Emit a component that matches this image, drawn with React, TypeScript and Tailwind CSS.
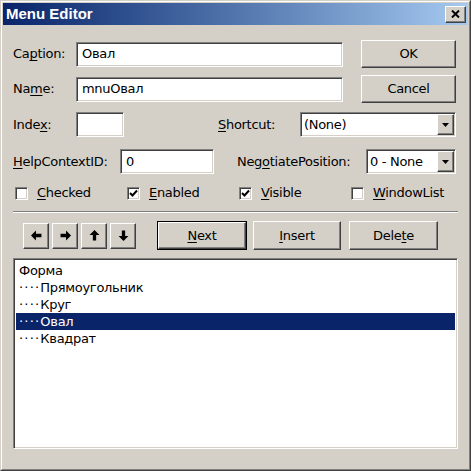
import type { ReactNode } from 'react'

const sunken =
  'border border-t-[#808080] border-l-[#808080] border-b-white border-r-white shadow-[inset_1px_1px_0_#404040,inset_-1px_-1px_0_#d4d0c8]'
const raised =
  'border border-t-white border-l-white border-b-[#404040] border-r-[#404040] shadow-[inset_-1px_-1px_0_#808080]'

// text with one underlined access key
function Mn({ pre = '', k, post = '' }: { pre?: string; k: string; post?: string }) {
  return (
    <span className="whitespace-nowrap">
      {pre}
      <span className="underline underline-offset-2">{k}</span>
      {post}
    </span>
  )
}

function TextBox({ className, value }: { className: string; value?: string }) {
  return (
    <div className={`${sunken} ${className} bg-white flex items-center pl-[5px]`}>
      {value}
    </div>
  )
}

function Button({
  className,
  children,
  isDefault,
}: {
  className: string
  children: ReactNode
  isDefault?: boolean
}) {
  if (isDefault) {
    return (
      <div className={`${className} border border-black flex`}>
        <div className={`${raised} flex-1 flex items-center justify-center`}>{children}</div>
      </div>
    )
  }
  return (
    <div className={`${raised} ${className} flex items-center justify-center`}>{children}</div>
  )
}

function Combo({ className, value }: { className: string; value: string }) {
  return (
    <div className={`${sunken} ${className} bg-white flex p-px`}>
      <div className="flex-1 flex items-center pl-[2px]">{value}</div>
      <div className={`${raised} w-[17px] bg-[#d4d0c8] flex items-center justify-center`}>
        <svg width="7" height="4" viewBox="0 0 7 4">
          <path d="M0 0 H7 L3.5 4 Z" fill="black" />
        </svg>
      </div>
    </div>
  )
}

function Checkbox({ checked, label }: { checked?: boolean; label: ReactNode }) {
  return (
    <div className="w-[112px] flex items-center">
      <div className={`${sunken} w-[13px] h-[13px] bg-white flex items-center justify-center`}>
        {checked && (
          <svg width="9" height="9" viewBox="0 0 9 9">
            <path d="M1 4 L3.5 6.5 L8 1.5" stroke="black" strokeWidth="2" fill="none" />
          </svg>
        )}
      </div>
      <div className="ml-[9px]">{label}</div>
    </div>
  )
}

function Arrow({ d }: { d: string }) {
  return (
    <Button className="w-[26px] h-[26px] mr-[3px]">
      <svg width="11" height="11" viewBox="0 0 10 10">
        <path d={d} fill="black" />
      </svg>
    </Button>
  )
}

const items: [number, string][] = [
  [0, 'Форма'],
  [1, 'Прямоугольник'],
  [1, 'Круг'],
  [1, 'Овал'],
  [1, 'Квадрат'],
]

export default function App() {
  return (
    <div className="w-[471px] h-[471px] bg-[#d4d0c8] border border-t-[#d4d0c8] border-l-[#d4d0c8] border-b-[#404040] border-r-[#404040] font-['DejaVu_Sans',sans-serif] text-[13px] tracking-[-0.3px] text-black">
      <div className="h-full border border-t-white border-l-white border-b-[#808080] border-r-[#808080] p-px flex flex-col">
        {/* Title bar */}
        <div className="h-[22px] flex items-center bg-linear-to-r from-[#0a246a] to-[#a6caf0] pl-[3px] pr-[2px]">
          <span className="flex-1 text-white font-bold text-[15px] tracking-normal font-['Liberation_Sans',sans-serif]">
            Menu Editor
          </span>
          <div className={`${raised} w-[21px] h-[17px] bg-[#d4d0c8] flex items-center justify-center`}>
            <svg width="9" height="8" viewBox="0 0 9 8">
              <path d="M1 0.5 L8 7.5 M8 0.5 L1 7.5" stroke="black" strokeWidth="2" />
            </svg>
          </div>
        </div>

        {/* Body */}
        <div className="pl-[10px] pt-[15px] flex flex-col">
          <div className="flex items-center h-[28px]">
            <div className="w-[63px]">
              <Mn pre="Ca" k="p" post="tion:" />
            </div>
            <TextBox className="w-[267px] h-[25px]" value="Овал" />
            <Button className="ml-[18px] w-[95px] h-[28px]">OK</Button>
          </div>

          <div className="flex items-center h-[28px] mt-[7px]">
            <div className="w-[63px]">
              <Mn pre="Na" k="m" post="e:" />
            </div>
            <TextBox className="w-[267px] h-[25px]" value="mnuОвал" />
            <Button className="ml-[18px] w-[95px] h-[28px]">Cancel</Button>
          </div>

          <div className="flex items-center h-[25px] mt-[9px]">
            <div className="w-[63px]">
              <Mn pre="Inde" k="x" post=":" />
            </div>
            <TextBox className="w-[48px] h-[25px]" />
            <div className="ml-[94px] w-[82px]">
              <Mn k="S" post="hortcut:" />
            </div>
            <Combo className="w-[156px] h-[25px]" value="(None)" />
          </div>

          <div className="flex items-center h-[25px] mt-[12px]">
            <div className="w-[107px]">
              <Mn k="H" post="elpContextID:" />
            </div>
            <TextBox className="w-[94px] h-[25px]" value="0" />
            <div className="ml-[23px] w-[129px]">
              <Mn pre="Neg" k="o" post="tiatePosition:" />
            </div>
            <Combo className="w-[90px] h-[25px]" value="0 - None" />
          </div>

          <div className="flex items-center h-[14px] mt-[12px] pl-[2px]">
            <Checkbox label={<Mn k="C" post="hecked" />} />
            <Checkbox checked label={<Mn k="E" post="nabled" />} />
            <Checkbox checked label={<Mn k="V" post="isible" />} />
            <Checkbox label={<Mn k="W" post="indowList" />} />
          </div>

          <div className="mt-[11px] w-[445px] h-[2px] border-t border-t-[#808080] border-b border-b-white" />

          <div className="flex items-center h-[29px] mt-[8px] pl-[10px]">
            <Arrow d="M0 5 L4.5 0.5 V3.5 H9.5 V6.5 H4.5 V9.5 Z" />
            <Arrow d="M10 5 L5.5 0.5 V3.5 H0.5 V6.5 H5.5 V9.5 Z" />
            <Arrow d="M5 0 L0.5 4.5 H3.5 V9.5 H6.5 V4.5 H9.5 Z" />
            <Arrow d="M5 10 L0.5 5.5 H3.5 V0.5 H6.5 V5.5 H9.5 Z" />
            <Button isDefault className="ml-[18px] w-[90px] h-[29px]">
              <Mn k="N" post="ext" />
            </Button>
            <Button className="ml-[6px] w-[88px] h-[29px]">
              <Mn k="I" post="nsert" />
            </Button>
            <Button className="ml-[8px] w-[89px] h-[29px]">
              <Mn pre="Dele" k="t" post="e" />
            </Button>
          </div>

          {/* Menu list */}
          <div className={`${sunken} mt-[8px] w-[445px] h-[191px] bg-white pt-[3px] px-[2px]`}>
            {items.map(([level, text], i) => (
              <div
                key={i}
                className={`h-[17px] flex items-center pl-[3px] ${
                  i === 3 ? 'bg-[#0a246a] text-white' : ''
                }`}
              >
                {level > 0 && <span className="tracking-[1.2px]">····</span>}
                {text}
              </div>
            ))}
          </div>
        </div>
      </div>
    </div>
  )
}
